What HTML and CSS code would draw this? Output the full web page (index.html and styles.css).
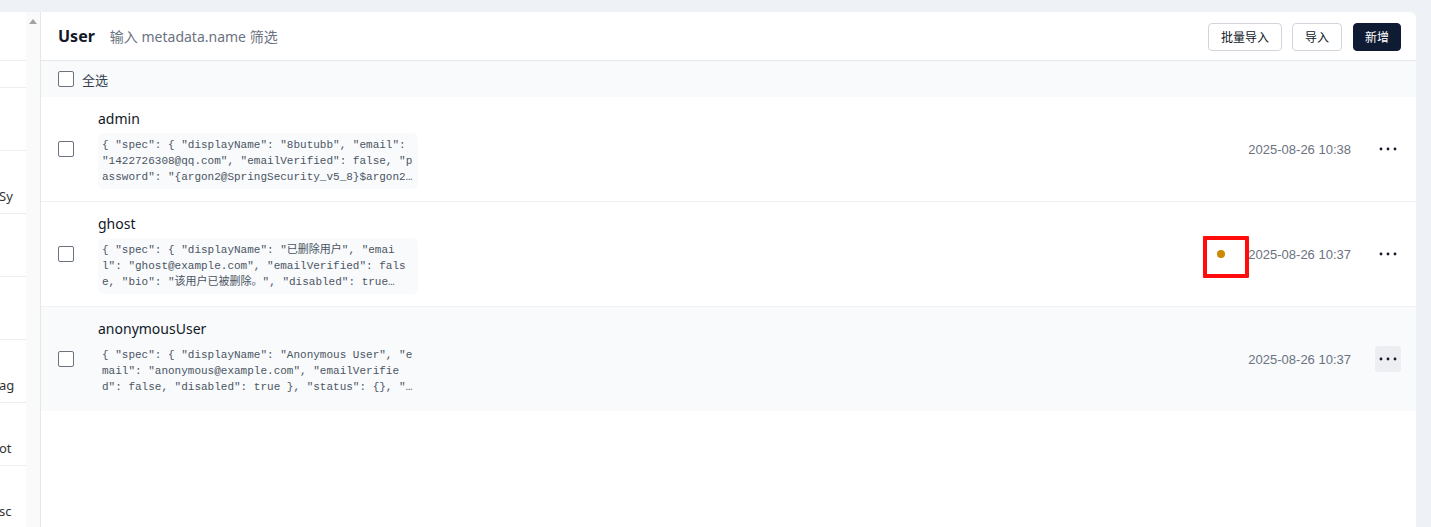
FILE: index.html
```html
<!DOCTYPE html>
<html lang="zh-CN">
<head>
<meta charset="utf-8">
<title>User</title>
<link rel="stylesheet" href="styles.css">
</head>
<body>
<div class="app">
  <aside class="sidebar">
    <div class="side-top"></div>
    <div class="side-item side-item--short"></div>
    <div class="side-item"></div>
    <div class="side-item"><span class="side-text">Sy</span></div>
    <div class="side-item"></div>
    <div class="side-item"></div>
    <div class="side-item"><span class="side-text">ag</span></div>
    <div class="side-item"><span class="side-text">ot</span></div>
    <div class="side-item"><span class="side-text">sc</span></div>
  </aside>
  <div class="scrollbar"><span class="scroll-arrow"></span></div>
  <main class="panel">
    <header class="panel-head">
      <div class="head-left">
        <h1 class="title">User</h1>
        <input class="filter" type="text" placeholder="输入 metadata.name 筛选">
      </div>
      <div class="head-actions">
        <button class="btn">批量导入</button>
        <button class="btn">导入</button>
        <button class="btn btn--primary">新增</button>
      </div>
    </header>
    <div class="select-bar">
      <span class="checkbox"></span>
      <span class="select-label">全选</span>
    </div>
    <ul class="list">
      <li class="row">
        <span class="checkbox"></span>
        <div class="row-body">
          <div class="row-name">admin</div>
          <div class="code">
            <span class="code-line">{ "spec": { "displayName": "8butubb", "email":</span>
            <span class="code-line">"1422726308@qq.com", "emailVerified": false, "p</span>
            <span class="code-line">assword": "{argon2@SpringSecurity_v5_8}$argon2…</span>
          </div>
        </div>
        <div class="row-meta">
          <span class="date">2025-08-26 10:38</span>
          <button class="more"><svg width="18" height="4" viewBox="0 0 18 4"><circle cx="2" cy="2" r="1.4"/><circle cx="9" cy="2" r="1.4"/><circle cx="16" cy="2" r="1.4"/></svg></button>
        </div>
      </li>
      <li class="row">
        <span class="checkbox"></span>
        <div class="row-body">
          <div class="row-name">ghost</div>
          <div class="code">
            <span class="code-line">{ "spec": { "displayName": "已删除用户", "emai</span>
            <span class="code-line">l": "ghost@example.com", "emailVerified": fals</span>
            <span class="code-line">e, "bio": "该用户已被删除。", "disabled": true…</span>
          </div>
        </div>
        <div class="row-meta">
          <span class="status-dot"></span>
          <span class="date">2025-08-26 10:37</span>
          <button class="more"><svg width="18" height="4" viewBox="0 0 18 4"><circle cx="2" cy="2" r="1.4"/><circle cx="9" cy="2" r="1.4"/><circle cx="16" cy="2" r="1.4"/></svg></button>
        </div>
        <span class="mark"></span>
      </li>
      <li class="row row--hover">
        <span class="checkbox"></span>
        <div class="row-body">
          <div class="row-name">anonymousUser</div>
          <div class="code">
            <span class="code-line">{ "spec": { "displayName": "Anonymous User", "e</span>
            <span class="code-line">mail": "anonymous@example.com", "emailVerifie</span>
            <span class="code-line">d": false, "disabled": true }, "status": {}, "…</span>
          </div>
        </div>
        <div class="row-meta">
          <span class="date">2025-08-26 10:37</span>
          <button class="more more--active"><svg width="18" height="4" viewBox="0 0 18 4"><circle cx="2" cy="2" r="1.4"/><circle cx="9" cy="2" r="1.4"/><circle cx="16" cy="2" r="1.4"/></svg></button>
        </div>
      </li>
    </ul>
  </main>
</div>
</body>
</html>
```
FILE: styles.css
```css
* { box-sizing: border-box; }
html, body { height: 100%; }
body {
  margin: 0;
  background: #eef2f6;
  font-family: "Noto Sans", "Noto Sans CJK SC", sans-serif;
  color: #111827;
  overflow: hidden;
}
.app {
  display: flex;
  height: 100%;
  padding-top: 12px;
  padding-right: 15px;
}
.sidebar {
  width: 26px;
  background: #fff;
  overflow: hidden;
  display: flex;
  flex-direction: column;
}
.side-top {
  height: 49px;
  border-bottom: 1px solid #eeeeee;
  flex: none;
}
.side-item {
  height: 63px;
  border-bottom: 1px solid #eeeeee;
  padding-top: 36px;
  flex: none;
}
.side-item--short { height: 27px; padding-top: 0; }
.side-text {
  display: block;
  font-size: 13px;
  line-height: 18px;
  color: #333;
  white-space: nowrap;
  margin-left: -1px;
}
.scrollbar {
  width: 15px;
  background: #fafafa;
  border-right: 1px solid #e6e6e6;
  display: flex;
  justify-content: center;
  flex: none;
}
.scroll-arrow {
  margin-top: 7px;
  width: 0;
  height: 0;
  border-left: 4.5px solid transparent;
  border-right: 4.5px solid transparent;
  border-bottom: 5px solid #a3a3a3;
}
.panel {
  flex: 1;
  background: #fff;
  border-top-right-radius: 6px;
  display: flex;
  flex-direction: column;
}
.panel-head {
  height: 49px;
  border-bottom: 1px solid #e5e7eb;
  display: flex;
  align-items: center;
  justify-content: space-between;
  padding: 0 15px 0 17px;
}
.head-left { display: flex; align-items: center; gap: 15px; }
.title {
  margin: 0;
  font-size: 16px;
  font-weight: 700;
  color: #111827;
}
.filter {
  border: none;
  outline: none;
  padding: 0;
  width: 260px;
  font: 14px "Noto Sans", "Noto Sans CJK SC", sans-serif;
  background: transparent;
}
.filter::placeholder { color: #6b7280; }
.head-actions { display: flex; gap: 10px; margin-top: 1px; }
.btn {
  height: 28px;
  padding: 0 12px;
  border: 1px solid #d1d5db;
  border-radius: 4px;
  background: #fff;
  color: #111827;
  font: 12px "Noto Sans CJK SC", sans-serif;
}
.btn--primary {
  background: #0f1a33;
  border-color: #0f1a33;
  color: #fff;
  padding: 0 11px;
  margin-left: 1px;
}
.select-bar {
  height: 36px;
  background: #f8fafc;
  display: flex;
  align-items: center;
  gap: 8px;
  padding-left: 17px;
}
.select-label { font-size: 13px; color: #374151; }
.checkbox {
  width: 16px;
  height: 16px;
  border: 1.5px solid #6b7280;
  border-radius: 2px;
  background: #fff;
  flex: none;
}
.list { list-style: none; margin: 0; padding: 0; }
.row {
  position: relative;
  display: flex;
  align-items: center;
  gap: 24px;
  padding: 12px 15px 12px 17px;
  border-bottom: 1px solid #f0f1f3;
}
.row--hover { background: #f8fafc; border-bottom: none; }
.row-body { flex: 1; display: flex; flex-direction: column; gap: 4px; }
.row-name { font-size: 14px; line-height: 20px; color: #111827; }
.code {
  width: 320px;
  padding: 4px;
  background: #f8fafc;
  border-radius: 6px;
  font: 11px/16px "Liberation Mono", "Noto Sans CJK SC", monospace;
  color: #4b5563;
}
.code-line {
  display: block;
  white-space: pre;
}
.row-meta { display: flex; align-items: center; gap: 24px; }
.status-dot {
  width: 8px;
  height: 8px;
  border-radius: 50%;
  background: #ca8a04;
  margin-right: -1px;
}
.date { font-size: 13px; font-family: "Liberation Sans", "Noto Sans", sans-serif; color: #6b7280; }
.more {
  width: 26px;
  height: 26px;
  border: none;
  border-radius: 4px;
  background: transparent;
  display: flex;
  align-items: center;
  justify-content: center;
  padding: 0;
  fill: #111827;
}
.more--active { background: #eceef1; }
.mark {
  position: absolute;
  right: 167px;
  top: 34px;
  width: 46px;
  height: 42px;
  border: 4px solid #ff0c0c;
  border-radius: 1px;
}
```
